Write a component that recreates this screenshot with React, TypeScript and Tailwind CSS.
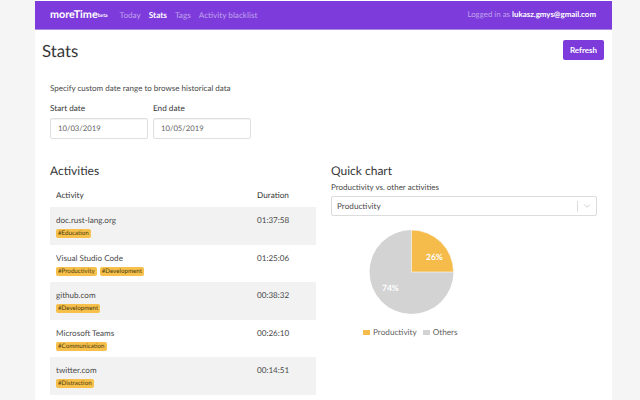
import React from "react";
import { ChevronDown } from "lucide-react";

const activities = [
  { name: "doc.rust-lang.org", time: "01:37:58", tags: ["#Education"] },
  { name: "Visual Studio Code", time: "01:25:06", tags: ["#Productivity", "#Development"] },
  { name: "github.com", time: "00:38:32", tags: ["#Development"] },
  { name: "Microsoft Teams", time: "00:26:10", tags: ["#Communication"] },
  { name: "twitter.com", time: "00:14:51", tags: ["#Distraction"] },
];

const DateField = ({ label, value }: { label: string; value: string }) => (
  <div className="w-[98px]">
    <div className="text-[8.2px] leading-[12px] text-[#363636]">{label}</div>
    <div className="mt-[4px] h-[21px] rounded-[2px] border border-[#dfdfdf] px-[7px] text-[7.7px] leading-[19px] text-[#666666] shadow-[inset_0_1px_1px_rgba(10,10,10,0.05)]">
      {value}
    </div>
  </div>
);

const App = () => {
  return (
    <div className="flex h-[400px] w-[640px] justify-start overflow-hidden bg-[#f5f5f5] font-['Lato','Liberation_Sans',sans-serif] [text-rendering:geometricPrecision]">
      <div className="ml-[35px] h-full w-[577px] bg-white">
        {/* Navbar */}
        <div className="mt-px flex h-[29px] items-center justify-between border-b border-[#a78be0] bg-[#7d3bdb] pl-[15px] pr-[16px] text-[8.2px]">
          <div className="flex items-center">
            <span className="text-[10.8px] font-bold text-white">moreTime</span>
            <span className="mt-[3px] text-[5px] font-bold text-white">beta</span>
            <span className="ml-[12px] text-[#c0a2ee]">Today</span>
            <span className="ml-[8px] font-bold text-white">Stats</span>
            <span className="ml-[8px] text-[#c0a2ee]">Tags</span>
            <span className="ml-[8px] text-[#c0a2ee]">Activity blacklist</span>
          </div>
          <div className="text-[7.9px] text-[#c0a2ee]">
            Logged in as <span className="font-bold text-white">lukasz.gmys@gmail.com</span>
          </div>
        </div>

        <div className="pl-[7px] pr-[8px]">
          <div className="mt-[10px] flex items-start justify-between">
            <h1 className="text-[16.8px] leading-[22px] text-[#363636]">Stats</h1>
            <button className="h-[20px] w-[41px] rounded-[2px] bg-[#7d3bdb] text-[8px] font-bold text-white">
              Refresh
            </button>
          </div>

          <div className="pl-[8px] pr-[7px]">
            <p className="mt-[20px] text-[8px] leading-[12px] text-[#4a4a4a]">
              Specify custom date range to browse historical data
            </p>
            <div className="mt-[8px] flex gap-[5px]">
              <DateField label="Start date" value="10/03/2019" />
              <DateField label="End date" value="10/05/2019" />
            </div>

            <div className="mt-[24px] flex">
              {/* Activities table */}
              <div className="w-[266px]">
                <h2 className="text-[12px] leading-[16px] text-[#363636]">Activities</h2>
                <div className="mt-[3px] flex h-[25px] items-center justify-between pl-[6px] pt-[1px] text-[8.2px] text-[#363636]">
                  <span>Activity</span>
                  <span className="w-[59px]">Duration</span>
                </div>
                {activities.map((row, index) => (
                  <div
                    key={row.name}
                    className={`flex h-[37.5px] justify-between pl-[6px] pt-[8px] text-[8.1px] leading-[11px] text-[#4a4a4a] ${
                      index % 2 === 0 ? "bg-[#f2f2f2]" : "bg-white"
                    }`}
                  >
                    <div>
                      <div>{row.name}</div>
                      <div className="mt-[3px] flex gap-[3px]">
                        {row.tags.map((tag) => (
                          <span
                            key={tag}
                            className="h-[9px] rounded-[2px] bg-[#f6c04a] px-[2px] text-[6.2px] leading-[9px] text-[#4a3a10]"
                          >
                            {tag}
                          </span>
                        ))}
                      </div>
                    </div>
                    <span className="w-[59px]">{row.time}</span>
                  </div>
                ))}
              </div>

              {/* Quick chart */}
              <div className="ml-[15px] w-[266px]">
                <h2 className="text-[12px] leading-[16px] text-[#363636]">Quick chart</h2>
                <div className="mt-[3px] text-[8px] leading-[11px] text-[#4a4a4a]">
                  Productivity vs. other activities
                </div>
                <div className="mt-[3px] flex h-[20px] items-center justify-between rounded-[2px] border border-[#dcdcdc] pl-[5px] text-[8.2px] text-[#4a4a4a]">
                  <span>Productivity</span>
                  <div className="flex h-[11px] w-[19px] items-center justify-center border-l border-[#dcdcdc]">
                    <ChevronDown className="h-[10px] w-[10px] text-[#c4c4c4]" />
                  </div>
                </div>
                <svg width="266" height="92" viewBox="0 0 266 92" className="mt-[9px] block">
                  <circle cx="80.5" cy="47" r="42" fill="#d3d3d3" />
                  <path d="M80.5 47 L80.5 5 A42 42 0 0 1 122.5 47 Z" fill="#f5bb4b" stroke="#ffffff" strokeWidth="0.6" />
                  <text x="95" y="35" fontSize="8.5" fontWeight="700" fill="#ffffff">26%</text>
                  <text x="51" y="66" fontSize="8.5" fontWeight="700" fill="#ffffff">74%</text>
                </svg>
                <div className="mt-[10px] flex items-center pl-[32px] text-[8.2px] leading-[11px] text-[#5f5f5f]">
                  <span className="mr-[3px] h-[5px] w-[7px] bg-[#f5bb4b]" />
                  <span>Productivity</span>
                  <span className="ml-[6px] mr-[3px] h-[5px] w-[7px] bg-[#d3d3d3]" />
                  <span>Others</span>
                </div>
              </div>
            </div>
          </div>
        </div>
      </div>
    </div>
  );
};

export default App;
